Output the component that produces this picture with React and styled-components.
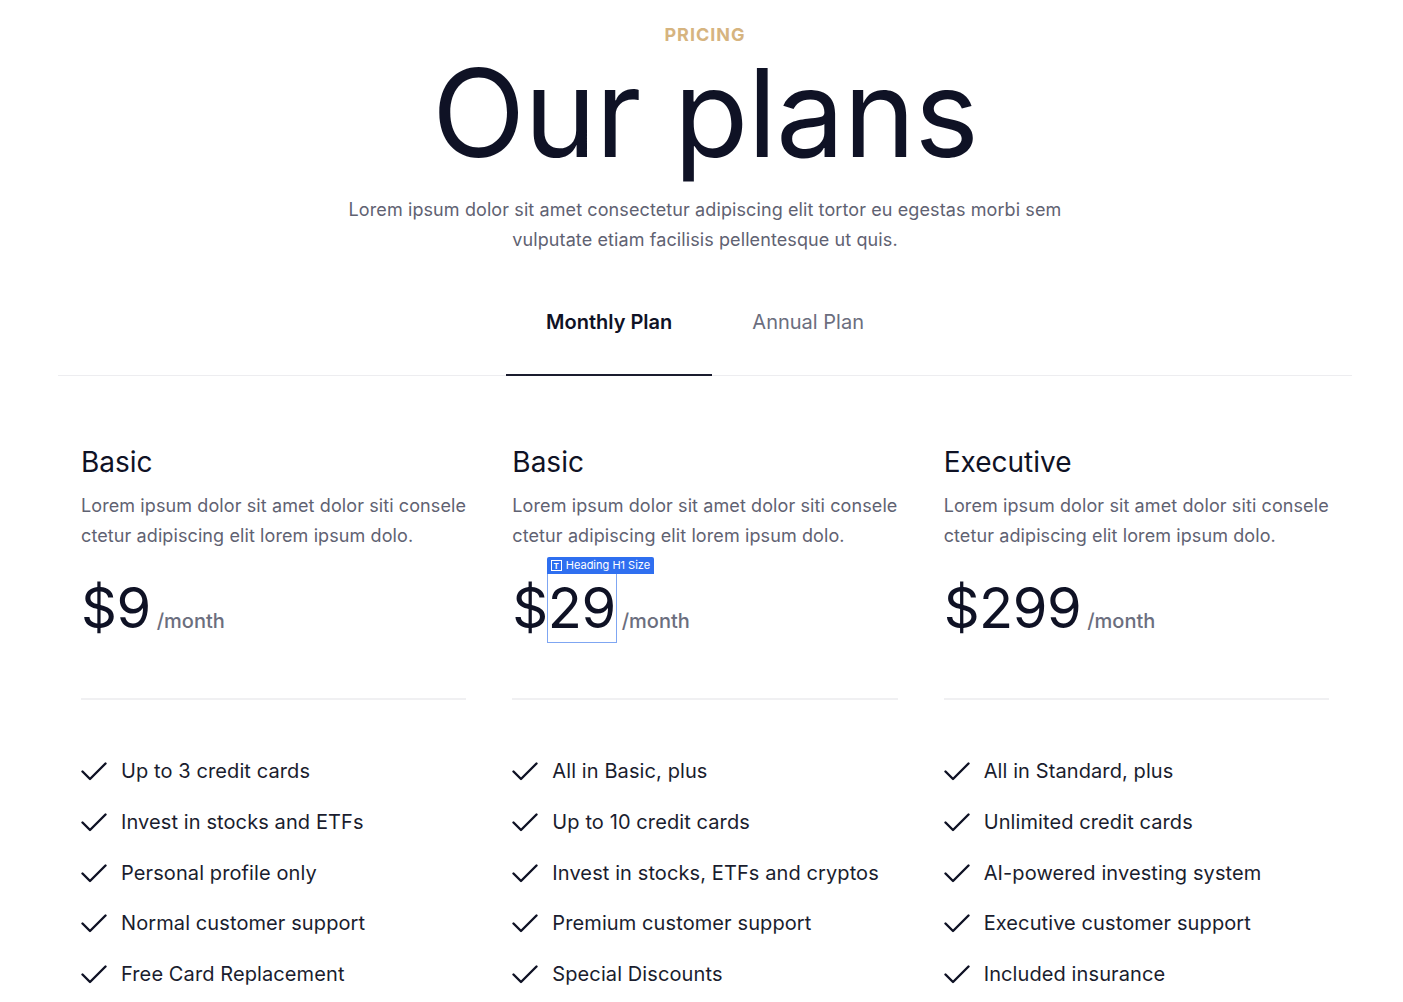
import React from 'react'
import styled, { createGlobalStyle } from 'styled-components'

const GlobalStyle = createGlobalStyle`
  body {
    margin: 0;
    background: #ffffff;
    font-family: Inter, "Noto Sans", sans-serif;
    color: #0f1225;
  }
`

const plans = [
  {
    name: 'Basic',
    price: '9',
    features: [
      'Up to 3 credit cards',
      'Invest in stocks and ETFs',
      'Personal profile only',
      'Normal customer support',
      'Free Card Replacement',
    ],
  },
  {
    name: 'Basic',
    price: '29',
    selected: true,
    features: [
      'All in Basic, plus',
      'Up to 10 credit cards',
      'Invest in stocks, ETFs and cryptos',
      'Premium customer support',
      'Special Discounts',
    ],
  },
  {
    name: 'Executive',
    price: '299',
    features: [
      'All in Standard, plus',
      'Unlimited credit cards',
      'AI-powered investing system',
      'Executive customer support',
      'Included insurance',
    ],
  },
]

function Check() {
  return (
    <svg width="26" height="26" viewBox="0 0 26 26" fill="none">
      <path d="M1.5 13.5 L9 21 L24.5 5.5" stroke="#0f1225" strokeWidth="2.4" strokeLinecap="round" strokeLinejoin="round" />
    </svg>
  )
}

function App() {
  return (
    <>
      <GlobalStyle />
      <Page>
        <Header>
          <Eyebrow>PRICING</Eyebrow>
          <Title>Our plans</Title>
          <Lead>
            Lorem ipsum dolor sit amet consectetur adipiscing elit tortor eu egestas morbi sem
            vulputate etiam facilisis pellentesque ut quis.
          </Lead>
        </Header>

        <Tabs>
          <Tab active>Monthly Plan</Tab>
          <Tab>Annual Plan</Tab>
        </Tabs>

        <Grid>
          {plans.map((p, i) => (
            <Card key={i}>
              <PlanName>{p.name}</PlanName>
              <PlanText>
                Lorem ipsum dolor sit amet dolor siti consele ctetur adipiscing elit lorem ipsum dolo.
              </PlanText>
              <PriceRow>
                <Amount>
                  ${p.selected ? (
                    <Selected>
                      <Badge>
                        <BadgeIcon>T</BadgeIcon>
                        Heading H1 Size
                      </Badge>
                      {p.price}
                    </Selected>
                  ) : (
                    p.price
                  )}
                </Amount>
                <Period>/month</Period>
              </PriceRow>
              <Rule />
              <Features>
                {p.features.map((f) => (
                  <Feature key={f}>
                    <Check />
                    <span>{f}</span>
                  </Feature>
                ))}
              </Features>
            </Card>
          ))}
        </Grid>
      </Page>
    </>
  )
}

const Page = styled.div`
  padding: 25px 51px 0 58px;
`

const Header = styled.header`
  display: flex;
  flex-direction: column;
  align-items: center;
  text-align: center;
`

const Eyebrow = styled.div`
  font-size: 18px;
  line-height: 20px;
  font-weight: 700;
  letter-spacing: 1px;
  color: #d6b47f;
`

const Title = styled.h1`
  margin: 6px 0 0;
  font-size: 122px;
  line-height: 124px;
  font-weight: 400;
  letter-spacing: -1px;
  color: #0f1225;
`

const Lead = styled.p`
  margin: 20px 0 0;
  max-width: 730px;
  font-size: 18px;
  line-height: 30px;
  letter-spacing: 0.1px;
  color: #5f6272;
`

const Tabs = styled.nav`
  margin-top: 15px;
  display: flex;
  justify-content: center;
  border-bottom: 1px solid #ededf0;
`

const Tab = styled.div`
  padding: 40px 40px 40px;
  margin-bottom: -1px;
  font-size: 20px;
  line-height: 24px;
  font-weight: ${(p) => (p.active ? 600 : 400)};
  color: ${(p) => (p.active ? '#0f1225' : '#6b6e7e')};
  border-bottom: 2px solid ${(p) => (p.active ? '#1a1c2e' : 'transparent')};
`

const Grid = styled.div`
  display: grid;
  grid-template-columns: repeat(3, 1fr);
  padding-top: 69px;
`

const Card = styled.div`
  padding: 0 23px;
`

const PlanName = styled.h3`
  margin: 0;
  font-size: 28px;
  line-height: 34px;
  font-weight: 400;
  color: #0f1225;
`

const PlanText = styled.p`
  margin: 12px 0 0;
  font-size: 18px;
  line-height: 30px;
  letter-spacing: 0.1px;
  color: #5f6272;
`

const PriceRow = styled.div`
  margin-top: 23px;
  display: flex;
  align-items: baseline;
  gap: 6px;
`

const Amount = styled.div`
  font-size: 56px;
  line-height: 68px;
  font-weight: 400;
  letter-spacing: -0.5px;
  color: #0f1225;
`

const Selected = styled.span`
  position: relative;
  outline: 1px solid #7fa6f2;
`

const Badge = styled.span`
  position: absolute;
  left: -1px;
  bottom: 100%;
  display: flex;
  align-items: center;
  gap: 4px;
  padding: 0 4px;
  height: 17px;
  background: #2f6ff0;
  color: #ffffff;
  font-size: 11px;
  line-height: 17px;
  letter-spacing: 0;
  white-space: nowrap;
  border-radius: 2px 2px 0 0;
`

const BadgeIcon = styled.span`
  display: inline-flex;
  align-items: center;
  justify-content: center;
  width: 9px;
  height: 9px;
  border: 1px solid #ffffff;
  font-size: 8px;
  line-height: 1;
  font-weight: 700;
`

const Period = styled.span`
  font-size: 20px;
  font-weight: 500;
  color: #6b6e7e;
`

const Rule = styled.hr`
  margin: 56px 0 0;
  border: none;
  border-top: 2px solid #f0f0f2;
`

const Features = styled.ul`
  list-style: none;
  margin: 56px 0 0;
  padding: 0;
  display: flex;
  flex-direction: column;
  gap: 20.75px;
`

const Feature = styled.li`
  display: flex;
  align-items: center;
  gap: 14px;
  font-size: 20px;
  line-height: 30px;
  letter-spacing: 0.1px;
  color: #1a1d2e;
`

export default App
